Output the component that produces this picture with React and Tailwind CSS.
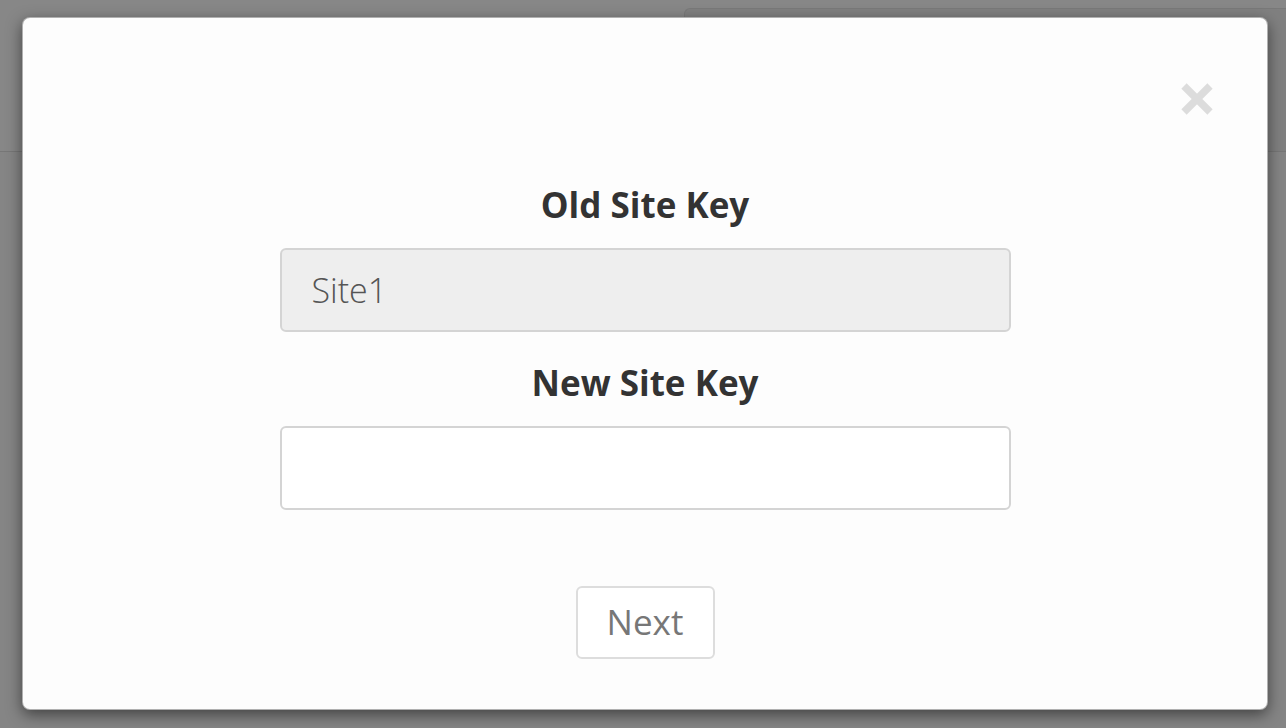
export default function App() {
  return (
    <div className="relative w-[1286px] h-[728px] overflow-hidden bg-[#fafafa]" style={{ fontFamily: '"Open Sans", "Noto Sans", sans-serif' }}>
      {/* page behind */}
      <div className="flex flex-col h-full">
        <div className="h-[152px] border-b border-[#e0e0e0] bg-[#ffffff] flex pt-[8px]">
          <div className="ml-[684px] flex-1 rounded-tl-md bg-[#f2f2f2] border-t border-l border-[#e4e4e4]" />
        </div>
        <div className="flex-1 bg-[#fcfcfc]" />
      </div>
      {/* backdrop */}
      <div className="absolute inset-0 bg-black/[0.47]" />
      {/* modal */}
      <div className="absolute left-[22px] top-[17px] w-[1246px] h-[693px] bg-[#fdfdfd] rounded-[8px] border border-black/30 shadow-[0_5px_15px_rgba(0,0,0,0.5)] flex flex-col">
        <div className="flex justify-end pt-[65px] pr-[54px]">
          <svg width="32" height="32" viewBox="0 0 32 32" className="text-[#dcdcdc]">
            <line x1="3" y1="3" x2="29" y2="29" stroke="currentColor" strokeWidth="7.5" />
            <line x1="29" y1="3" x2="3" y2="29" stroke="currentColor" strokeWidth="7.5" />
          </svg>
        </div>
        <div className="flex flex-col items-center pt-[66px]">
          <div className="text-[35px] leading-[48px] font-bold text-[#333333]">Old Site Key</div>
          <div className="mt-[19px] w-[731px] h-[84px] rounded-[6px] border-2 border-[#d4d4d4] bg-[#eeeeee] flex items-center px-[30px] text-[34px] font-light text-[#555555]">
            Site1
          </div>
          <div className="mt-[27px] text-[35px] leading-[48px] font-bold text-[#333333]">New Site Key</div>
          <div className="mt-[19px] w-[731px] h-[84px] rounded-[6px] border-2 border-[#d4d4d4] bg-white" />
          <div className="mt-[76px] w-[139px] h-[73px] rounded-[6px] border-2 border-[#dddddd] bg-white flex items-center justify-center text-[35px] text-[#777777]">
            Next
          </div>
        </div>
      </div>
    </div>
  );
}
